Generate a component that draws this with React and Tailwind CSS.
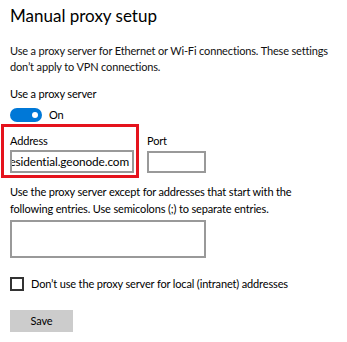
import React from "react";

export default function App() {
  return (
    <div className="w-[347px] h-[342px] overflow-hidden bg-white px-[10px] pt-[5px] text-[#000] font-['Lato',sans-serif] text-[11px] tracking-[-0.15px]">
      <h1 className="text-[17px] leading-[22px] font-normal tracking-normal">Manual proxy setup</h1>

      <p className="mt-[16px] leading-[16px] text-[#111]">
        Use a proxy server for Ethernet or Wi-Fi connections. These settings don’t apply to VPN connections.
      </p>

      <div className="mt-[11px] leading-[16px]">Use a proxy server</div>
      <div className="mt-[5px] flex items-center gap-[7px]">
        <div className="flex h-[14px] w-[32px] items-center justify-end rounded-full bg-[#0078d7] pr-[4px]">
          <div className="h-[6px] w-[6px] rounded-full bg-white" />
        </div>
        <span className="leading-[16px]">On</span>
      </div>

      <div className="mt-[10px] flex items-start gap-[13px]">
        <div className="relative">
          <div className="leading-[16px]">Address</div>
          <div className="mt-[1px] flex h-[23px] w-[124px] items-center justify-end overflow-hidden border-2 border-[#999] bg-white pr-[3px]">
            <span className="shrink-0 text-[11.8px] tracking-[-0.1px] leading-[16px] whitespace-nowrap">
              residential.geonode.com
            </span>
          </div>
          <div className="pointer-events-none absolute -left-[9px] -top-[9px] -right-[5px] -bottom-[5px] border-[3px] border-[#e5131d]" />
        </div>
        <div>
          <div className="leading-[16px]">Port</div>
          <div className="mt-[2px] h-[22px] w-[59px] border-2 border-[#999] bg-white" />
        </div>
      </div>

      <p className="mt-[10px] leading-[17px]">
        Use the proxy server except for addresses that start with the following entries. Use semicolons (;) to separate entries.
      </p>
      <div className="mt-[3px] h-[38px] w-[196px] border-2 border-[#999] bg-white" />

      <label className="mt-[18px] flex items-center gap-[7px]">
        <span className="h-[14px] w-[14px] border-2 border-[#333]" />
        <span className="leading-[16px]">Don’t use the proxy server for local (intranet) addresses</span>
      </label>

      <button className="mt-[18px] flex h-[22px] w-[63px] items-center justify-center bg-[#cccccc] leading-[16px]">
        Save
      </button>
    </div>
  );
}
